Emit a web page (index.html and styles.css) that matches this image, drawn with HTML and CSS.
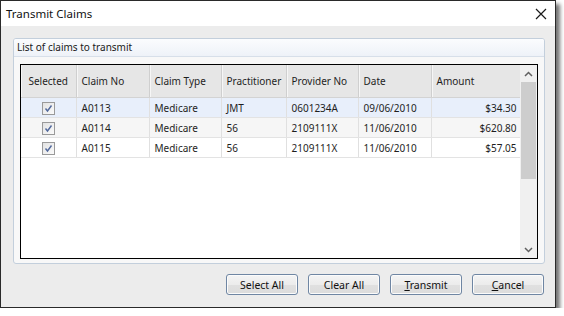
FILE: index.html
```html
<!DOCTYPE html>
<html lang="en">
<head>
  <meta charset="UTF-8">
  <title>Transmit Claims</title>
  <link rel="stylesheet" href="styles.css">
</head>
<body>
  <div class="window">
    <div class="title-bar">
      <span class="title">Transmit Claims</span>
      <svg class="close" width="12" height="12" viewBox="0 0 12 12">
        <path d="M1 1 L11 11 M11 1 L1 11" stroke="#1a1a1a" stroke-width="1.2" fill="none"/>
      </svg>
    </div>
    <div class="dialog-body">
      <div class="panel">
        <div class="panel-header">List of claims to transmit</div>
        <div class="panel-content">
          <div class="grid">
            <div class="grid-table">
              <table>
                <colgroup>
                  <col style="width:55px"><col style="width:73px"><col style="width:72px">
                  <col style="width:65px"><col style="width:72px"><col style="width:73px">
                  <col style="width:89px">
                </colgroup>
                <thead>
                  <tr>
                    <th class="center">Selected</th>
                    <th>Claim No</th>
                    <th>Claim Type</th>
                    <th>Practitioner</th>
                    <th>Provider No</th>
                    <th>Date</th>
                    <th>Amount</th>
                  </tr>
                </thead>
                <tbody>
                  <tr class="current">
                    <td class="center"><span class="check"><svg width="9" height="9" viewBox="0 0 9 9"><path d="M1.5 4.5 L3.5 7 L7.5 1.5" stroke="#52699c" stroke-width="1.4" fill="none"/></svg></span></td>
                    <td>A0113</td><td>Medicare</td><td>JMT</td><td>0601234A</td><td>09/06/2010</td><td class="num">$34.30</td>
                  </tr>
                  <tr class="alt">
                    <td class="center"><span class="check"><svg width="9" height="9" viewBox="0 0 9 9"><path d="M1.5 4.5 L3.5 7 L7.5 1.5" stroke="#52699c" stroke-width="1.4" fill="none"/></svg></span></td>
                    <td>A0114</td><td>Medicare</td><td>56</td><td>2109111X</td><td>11/06/2010</td><td class="num">$620.80</td>
                  </tr>
                  <tr>
                    <td class="center"><span class="check"><svg width="9" height="9" viewBox="0 0 9 9"><path d="M1.5 4.5 L3.5 7 L7.5 1.5" stroke="#52699c" stroke-width="1.4" fill="none"/></svg></span></td>
                    <td>A0115</td><td>Medicare</td><td>56</td><td>2109111X</td><td>11/06/2010</td><td class="num">$57.05</td>
                  </tr>
                </tbody>
              </table>
            </div>
            <div class="scrollbar">
              <div class="arrow">
                <svg width="9" height="6" viewBox="0 0 9 6"><path d="M1 5 L4.5 1.5 L8 5" stroke="#606060" stroke-width="1.5" fill="none"/></svg>
              </div>
              <div class="thumb"></div>
              <div class="track"></div>
              <div class="arrow">
                <svg width="9" height="6" viewBox="0 0 9 6"><path d="M1 1 L4.5 4.5 L8 1" stroke="#606060" stroke-width="1.5" fill="none"/></svg>
              </div>
            </div>
          </div>
        </div>
      </div>
      <div class="buttons">
        <button>Select All</button>
        <button>Clear All</button>
        <button><u>T</u>ransmit</button>
        <button><u>C</u>ancel</button>
      </div>
    </div>
  </div>
</body>
</html>
```

FILE: styles.css
```css
body {
  margin: 0;
  background-color: #fff;
  font-family: "Noto Sans", "Liberation Sans", sans-serif;
  color: #1e1e1e;
}
.window {
  width: 554px;
  height: 306px;
  border: 1px solid #2a2a2a;
  box-shadow: 4px 4px 4px rgba(0, 0, 0, 0.55);
  display: flex;
  flex-direction: column;
  background-color: #ececec;
}
.title-bar {
  height: 25px;
  background-color: #fff;
  display: flex;
  align-items: center;
  justify-content: space-between;
  padding: 0 8px 0 5px;
}
.title {
  font-size: 11.5px;
  color: #111;
}
.dialog-body {
  flex: 1;
  padding: 12px 10px 0 12px;
  display: flex;
  flex-direction: column;
}
.panel {
  height: 224px;
  border: 1px solid #c3cfdc;
  border-radius: 3px;
  background-color: #f8f8f8;
  display: flex;
  flex-direction: column;
}
.panel-header {
  height: 17px;
  line-height: 17px;
  padding-left: 3px;
  font-size: 10px;
  color: #1a1a1a;
  background: linear-gradient(#fbfcfe, #eef2f8);
  border-bottom: 1px solid #d7dfe9;
  border-radius: 2px 2px 0 0;
}
.panel-content {
  flex: 1;
  padding: 7px 6px 4px 6px;
  display: flex;
}
.grid {
  flex: 1;
  border: 1px solid #000;
  background-color: #fff;
  display: flex;
}
.grid-table {
  width: 499px;
}
table {
  border-collapse: collapse;
  table-layout: fixed;
  width: 499px;
  font-size: 10px;
}
th {
  height: 32px;
  padding: 0 0 0 5px;
  text-align: left;
  font-weight: normal;
  color: #1e1e1e;
  background-color: #e6e6e6;
  border-right: 1px solid #cfcfcf;
  border-bottom: 1px solid #d3d3d3;
  box-shadow: inset 1px 0 0 #f6f6f6;
}
td {
  height: 19px;
  padding: 0 0 0 5px;
  border-right: 1px solid #e0e0e0;
  border-bottom: 1px solid #e3e3e3;
  white-space: nowrap;
}
.center {
  text-align: center;
  padding: 0;
}
.num {
  text-align: right;
  padding: 0 3px 0 0;
}
tr.current td {
  background-color: #e8effb;
}
tr.alt td {
  background-color: #f6f6f6;
}
.check {
  display: inline-flex;
  align-items: center;
  justify-content: center;
  width: 11px;
  height: 11px;
  margin-top: 3px;
  border: 1px solid #9a9a9a;
  background: linear-gradient(135deg, #e2e2e2, #fbfbfb);
}
.scrollbar {
  width: 17px;
  display: flex;
  flex-direction: column;
  background-color: #f0f0f0;
}
.arrow {
  height: 17px;
  display: flex;
  align-items: center;
  justify-content: center;
}
.thumb {
  height: 97px;
  margin: 0 1px;
  background-color: #cdcdcd;
}
.track {
  flex: 1;
}
.buttons {
  display: flex;
  justify-content: flex-end;
  gap: 10px;
  margin-top: 10px;
  padding-right: 1px;
}
button {
  width: 72px;
  height: 21px;
  padding: 0;
  font-family: "Noto Sans", "Liberation Sans", sans-serif;
  font-size: 10.5px;
  color: #111;
  border: 1px solid #6f86a3;
  border-radius: 3px;
  background: linear-gradient(#f4f4f4, #ececec 50%, #e0e0e0 51%, #dcdcdc);
  box-shadow: inset 0 0 0 1px #fbfbfb;
}
```
